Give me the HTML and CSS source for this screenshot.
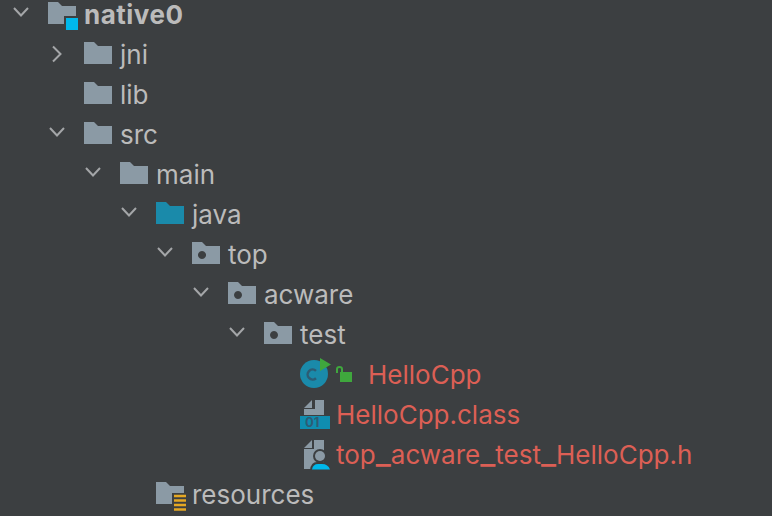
FILE: index.html
```html
<!DOCTYPE html>
<html lang="en">
<head>
    <meta charset="UTF-8">
    <meta name="viewport" content="width=device-width, initial-scale=1.0">
    <title>Project tree</title>
    <link rel="stylesheet" href="styles.css">
</head>
<body>

<svg class="defs" width="0" height="0">
    <symbol id="down" viewBox="0 0 18 40">
        <path d="M2 13 L9 20.500 L16 13" fill="none" stroke="#a4a6a8" stroke-width="2"/>
    </symbol>
    <symbol id="right" viewBox="0 0 18 40">
        <path d="M5 11.500 L12.500 19 L5 26.500" fill="none" stroke="#a4a6a8" stroke-width="2"/>
    </symbol>
    <symbol id="folder" viewBox="0 0 28 40">
        <path d="M0 7 H10 L14 11 H28 V29 H0 Z"/>
    </symbol>
    <symbol id="package" viewBox="0 0 28 40">
        <path fill-rule="evenodd" d="M0 7 H10 L14 11 H28 V29 H0 Z M10 16 a4 4 0 1 0 0.010 0 Z"/>
    </symbol>
</svg>

<div class="tree">
    <div class="row lv0 bold">
        <svg class="arrow"><use href="#down"/></svg>
        <svg class="icon" viewBox="0 0 28 40">
            <use href="#folder" class="grey" width="28" height="40"/>
            <rect x="16" y="21" width="16" height="16" fill="#3c3f41"/>
            <rect x="18" y="23" width="12" height="12" fill="#00b8eb"/>
        </svg>
        <span class="name">native0</span>
    </div>
    <div class="row lv1">
        <svg class="arrow"><use href="#right"/></svg>
        <svg class="icon grey"><use href="#folder"/></svg>
        <span class="name">jni</span>
    </div>
    <div class="row lv1">
        <span class="arrow"></span>
        <svg class="icon grey"><use href="#folder"/></svg>
        <span class="name">lib</span>
    </div>
    <div class="row lv1">
        <svg class="arrow"><use href="#down"/></svg>
        <svg class="icon grey"><use href="#folder"/></svg>
        <span class="name">src</span>
    </div>
    <div class="row lv2">
        <svg class="arrow"><use href="#down"/></svg>
        <svg class="icon grey"><use href="#folder"/></svg>
        <span class="name">main</span>
    </div>
    <div class="row lv3">
        <svg class="arrow"><use href="#down"/></svg>
        <svg class="icon blue"><use href="#folder"/></svg>
        <span class="name">java</span>
    </div>
    <div class="row lv4">
        <svg class="arrow"><use href="#down"/></svg>
        <svg class="icon grey"><use href="#package"/></svg>
        <span class="name">top</span>
    </div>
    <div class="row lv5">
        <svg class="arrow"><use href="#down"/></svg>
        <svg class="icon grey"><use href="#package"/></svg>
        <span class="name">acware</span>
    </div>
    <div class="row lv6">
        <svg class="arrow"><use href="#down"/></svg>
        <svg class="icon grey"><use href="#package"/></svg>
        <span class="name">test</span>
    </div>
    <div class="row lv7">
        <span class="arrow"></span>
        <svg class="icon icon-wide" viewBox="0 0 52 40">
            <circle cx="14" cy="19" r="14" fill="#1a8aaa"/>
            <path d="M16 15.800 A5 5 0 1 0 16 23.200" fill="none" stroke="#2d5c74" stroke-width="2.500"/>
            <path d="M20 3 L31 9.500 L20 16 Z" fill="#3fa73d"/>
            <path d="M37 18 V14 Q37 12 39.500 12 Q42 12 42 14 V17" fill="none" stroke="#3fa73d" stroke-width="2"/>
            <rect x="40" y="17" width="12" height="10" fill="#3fa73d"/>
        </svg>
        <span class="name changed lock-gap">HelloCpp</span>
    </div>
    <div class="row lv7">
        <span class="arrow"></span>
        <svg class="icon icon-file" viewBox="0 0 30 40">
            <path class="grey" d="M4 13 L12 5 V13 Z M15 5 H24 V20 H15 Z M4 14 H15 V20 H4 Z"/>
            <rect y="21" width="30" height="13" fill="#0f8db0"/>
            <text x="5" y="32" class="bits">01</text>
        </svg>
        <span class="name changed">HelloCpp.class</span>
    </div>
    <div class="row lv7">
        <span class="arrow"></span>
        <svg class="icon icon-file" viewBox="0 0 30 40">
            <path class="grey" d="M4 13 L12 5 V13 Z M14 5 H24 V34 H4 V14 H14 Z"/>
            <circle cx="20" cy="21" r="7" fill="#3c3f41"/>
            <circle cx="20" cy="21" r="5" fill="#8b9aa5"/>
            <path d="M10 35 Q11 27 17 27 H23 Q29 27 30 35 Z" fill="#3c3f41"/>
            <path d="M12 34.500 Q13 29 18 29 H22 Q28 29 30 34.500 Z" fill="#00b8eb"/>
        </svg>
        <span class="name changed">top<span class="us">_</span>acware<span class="us">_</span>test<span class="us">_</span>HelloCpp.h</span>
    </div>
    <div class="row lv3">
        <span class="arrow"></span>
        <svg class="icon" viewBox="0 0 28 40">
            <use href="#folder" class="grey" width="28" height="40"/>
            <rect x="16" y="18" width="14" height="20" fill="#3c3f41"/>
            <path d="M18 21 H30 M18 25.500 H30 M18 30 H30 M18 34.500 H30" stroke="#e5a823" stroke-width="2.500"/>
        </svg>
        <span class="name">resources</span>
    </div>
</div>

</body>
</html>
```

FILE: styles.css
```css
* {
    box-sizing: border-box;
}
body {
    margin: 0;
    height: 516px;
    overflow: hidden;
    background: #3c3f41;
    color: #bbbbbb;
    font-family: Inter, 'Noto Sans', sans-serif;
    font-size: 26px;
}
.defs {
    display: block;
    height: 0;
}
.tree {
    margin-top: -5px;
}
.row {
    display: flex;
    align-items: center;
    height: 40px;
    white-space: nowrap;
}
.lv0 { padding-left: 12px; }
.lv1 { padding-left: 48px; }
.lv2 { padding-left: 84px; }
.lv3 { padding-left: 120px; }
.lv4 { padding-left: 156px; }
.lv5 { padding-left: 192px; }
.lv6 { padding-left: 228px; }
.lv7 { padding-left: 264px; }
.arrow {
    flex: none;
    width: 18px;
    height: 40px;
    margin-right: 18px;
}
.icon {
    flex: none;
    width: 28px;
    height: 40px;
    margin-right: 8px;
    overflow: visible;
}
.icon-wide {
    width: 52px;
}
.icon-file {
    width: 30px;
    margin-right: 6px;
}
.grey {
    fill: #8b9aa5;
}
.blue {
    fill: #1a8aaa;
}
.name {
    line-height: 40px;
}
.bold .name {
    font-weight: 700;
    letter-spacing: 0.5px;
}
.changed {
    color: #dc5f55;
}
.lock-gap {
    margin-left: 8px;
}
/* underscores run wider in the original font */
.us {
    font-size: 33px;
    line-height: 0;
}
.bits {
    font-family: Inter, sans-serif;
    font-size: 13px;
    font-weight: 700;
    fill: #2d5c74;
}
```
